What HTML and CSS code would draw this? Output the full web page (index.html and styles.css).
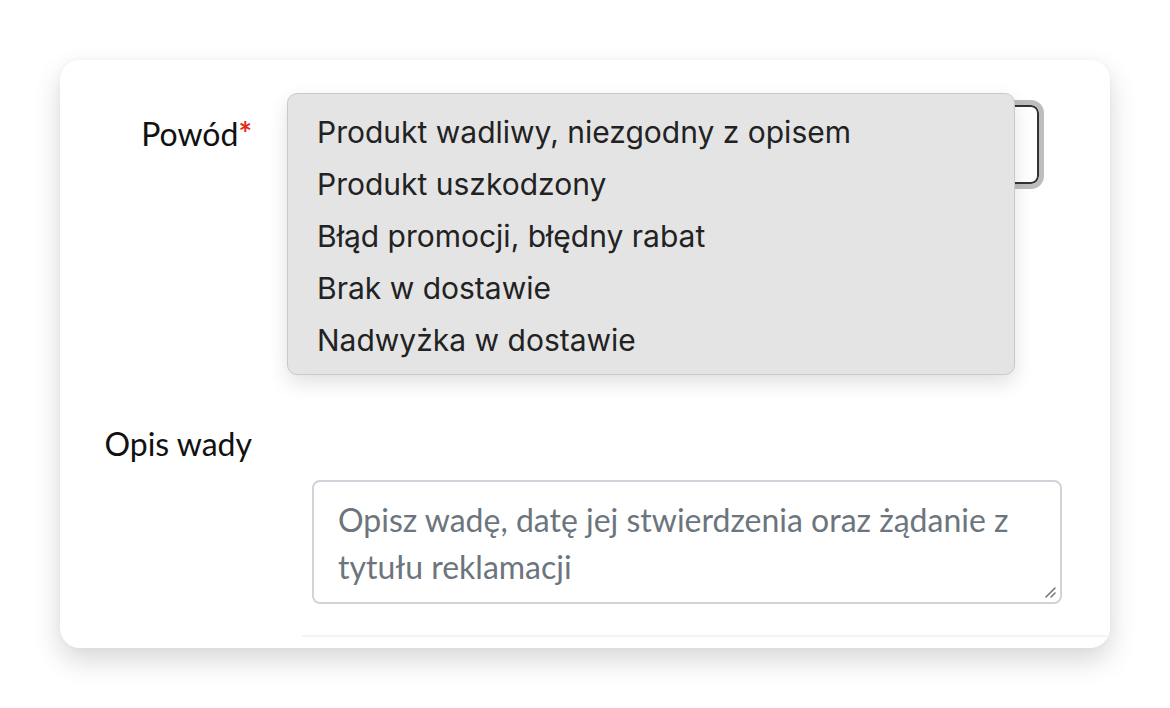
FILE: index.html
```html
<!DOCTYPE html>
<html lang="pl">
<head>
<meta charset="utf-8">
<link rel="stylesheet" href="styles.css">
</head>
<body>
<div class="card">
  <div class="row row-reason">
    <label class="label">Powód<span class="req">*</span></label>
    <div class="control">
      <div class="select"></div>
    </div>
  </div>
  <div class="row row-desc">
    <label class="label label-desc">Opis wady</label>
  </div>
  <div class="row">
    <div class="spacer"></div>
    <div class="control">
      <div class="textarea">
        <span class="placeholder">Opisz wadę, datę jej stwierdzenia oraz żądanie z tytułu reklamacji</span>
        <svg class="grip" width="14" height="14" viewBox="0 0 14 14"><path d="M12 3 L3 12 M12 8 L8 12" stroke="#777" stroke-width="1.6" stroke-linecap="round"/></svg>
      </div>
    </div>
  </div>
  <div class="footer-line"></div>
  <ul class="menu">
    <li>Produkt wadliwy, niezgodny z opisem</li>
    <li>Produkt uszkodzony</li>
    <li>Błąd promocji, błędny rabat</li>
    <li>Brak w dostawie</li>
    <li>Nadwyżka w dostawie</li>
  </ul>
</div>
</body>
</html>
```
FILE: styles.css
```css
html, body {
  margin: 0;
  padding: 0;
  background: #ffffff;
}
body {
  padding: 60px;
  font-family: "Lato", "Liberation Sans", sans-serif;
}
.card {
  position: relative;
  box-sizing: border-box;
  width: 1050px;
  height: 588px;
  background: #fff;
  border-radius: 20px;
  box-shadow: 0 12px 28px rgba(0, 0, 0, 0.16), 0 0 6px rgba(0,0,0,0.03);
  padding-top: 45px;
}
.row {
  display: grid;
  grid-template-columns: 192px 750px;
  column-gap: 60px;
}
.label {
  text-align: right;
  font-size: 32px;
  line-height: 40px;
  color: #111;
}
.row-reason .label {
  padding-top: 9px;
}
.req {
  color: #e3291b;
  font-weight: 700;
}
.select {
  box-sizing: border-box;
  width: 727px;
  height: 79px;
  border: 2px solid #333;
  border-radius: 8px;
  outline: 5px solid #bdbdbd;
  outline-offset: 0;
  background: #fff;
}
.row-desc {
  margin-top: 241px;
}
.label-desc {
  line-height: 38px;
}
.row-desc + .row {
  margin-top: 17px;
}
.textarea {
  position: relative;
  box-sizing: border-box;
  width: 750px;
  height: 124px;
  border: 2px solid #ced4da;
  border-radius: 8px;
  padding: 14px 24px;
  font-size: 32px;
  line-height: 47px;
  color: #6c757d;
}
.placeholder {
  display: block;
}
.grip {
  position: absolute;
  right: 3px;
  bottom: 3px;
}
.footer-line {
  position: absolute;
  left: 242px;
  right: 0;
  bottom: 11px;
  height: 2px;
  background: #f4f4f4;
}
.menu {
  position: absolute;
  left: 227px;
  top: 33px;
  box-sizing: border-box;
  width: 728px;
  height: 282px;
  margin: 0;
  padding: 12px 0 0 29px;
  list-style: none;
  background: #e4e4e4;
  border: 1px solid #c9c9c9;
  border-radius: 10px;
  box-shadow: 0 8px 20px rgba(0, 0, 0, 0.12);
  font-family: "Inter", "Noto Sans", sans-serif;
  font-size: 30px;
  line-height: 52px;
  color: #222;
}
```
